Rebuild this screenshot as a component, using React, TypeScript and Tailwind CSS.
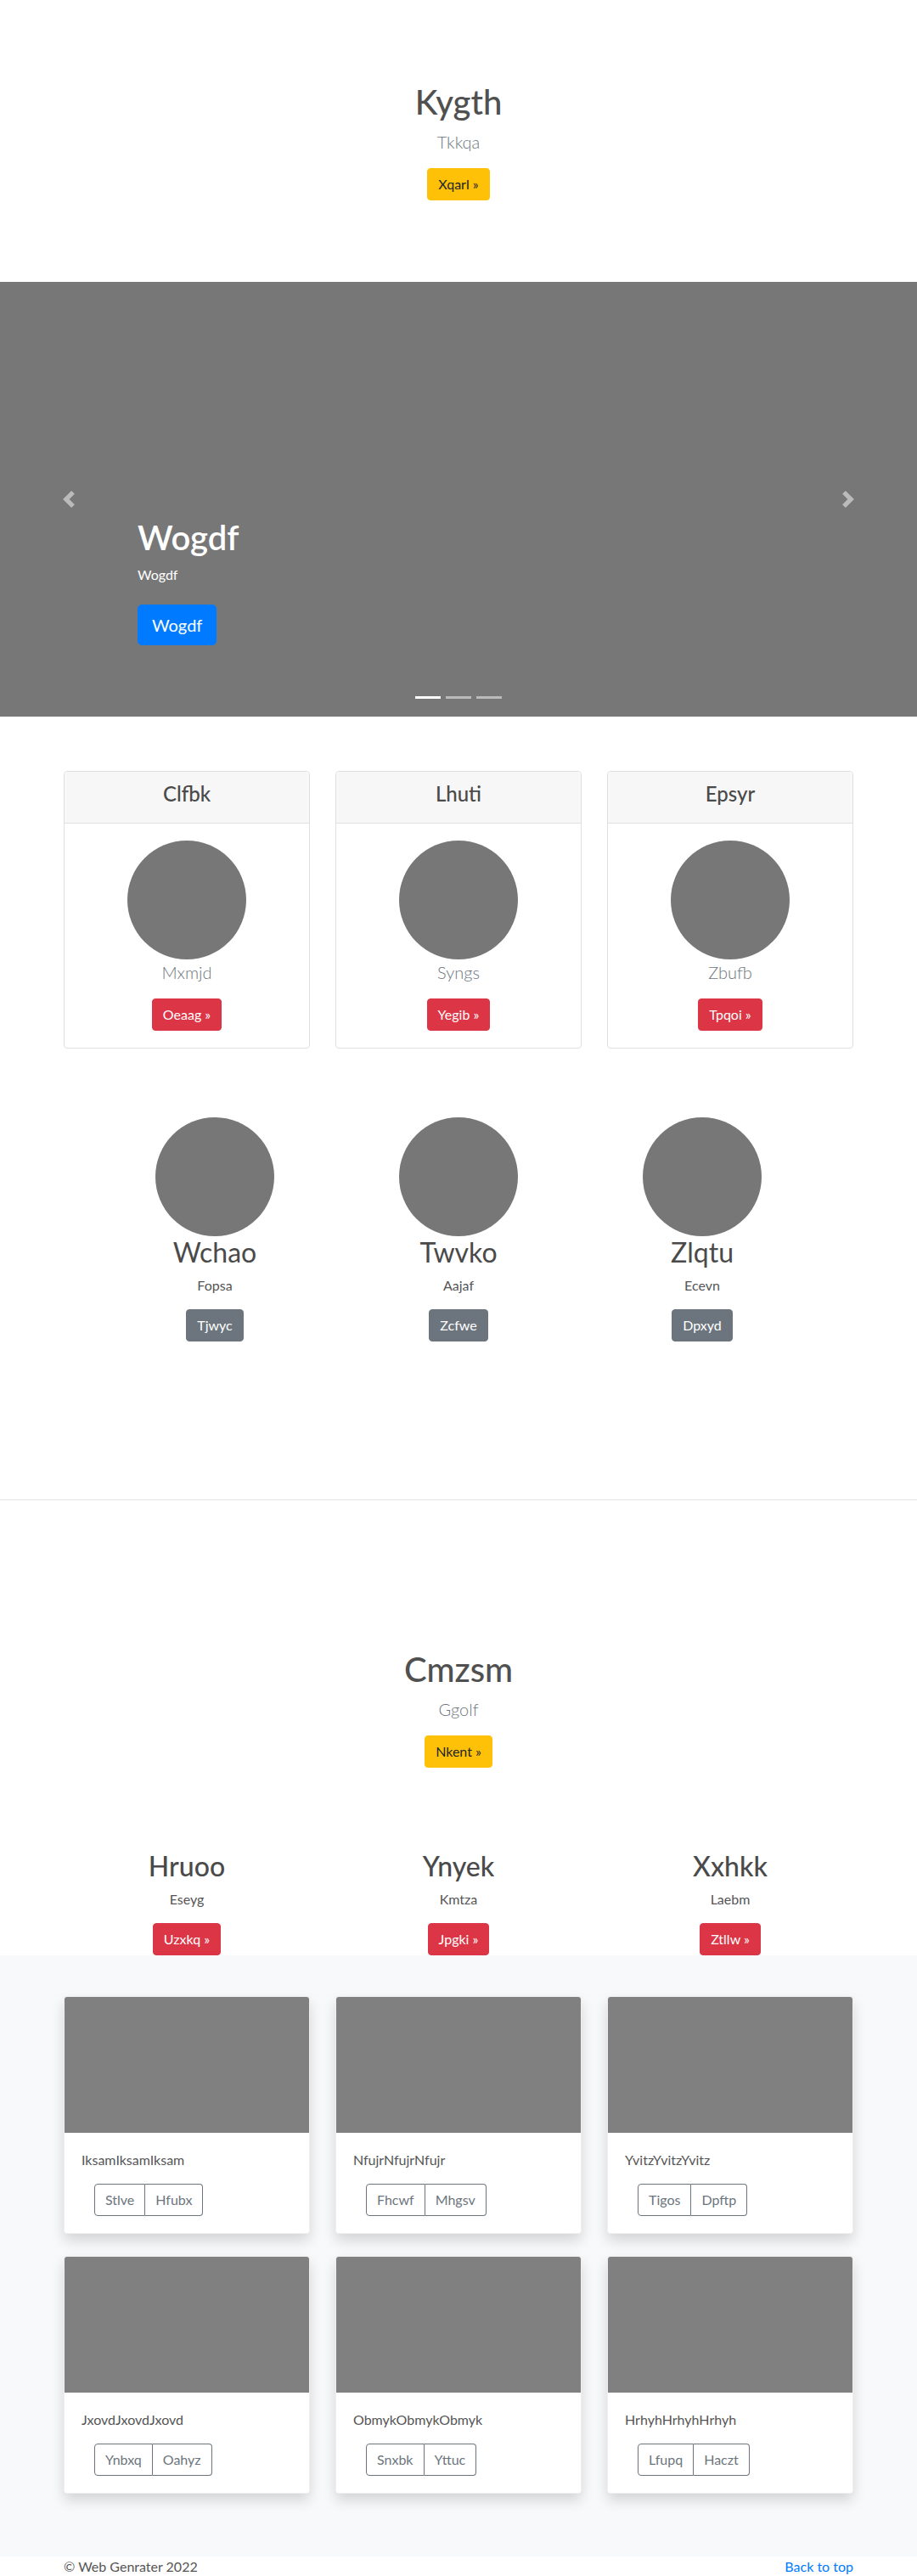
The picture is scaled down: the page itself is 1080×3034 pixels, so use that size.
import React from "react";

const btn = "inline-block rounded-[4px] border px-3 py-[6px] text-base leading-6 align-middle";

function PrevIcon() {
  return (
    <svg width="20" height="20" viewBox="0 0 8 8" fill="#fff">
      <path d="M5.25 0l-4 4 4 4 1.5-1.5L4.25 4l2.5-2.5L5.25 0z" />
    </svg>
  );
}
function NextIcon() {
  return (
    <svg width="20" height="20" viewBox="0 0 8 8" fill="#fff">
      <path d="M2.75 0l-1.5 1.5L3.75 4l-2.5 2.5L2.75 8l4-4-4-4z" />
    </svg>
  );
}

const deck = [
  { title: "Clfbk", name: "Mxmjd", btn: "Oeaag »" },
  { title: "Lhuti", name: "Syngs", btn: "Yegib »" },
  { title: "Epsyr", name: "Zbufb", btn: "Tpqoi »" },
];

const marketing = [
  { title: "Wchao", text: "Fopsa", btn: "Tjwyc" },
  { title: "Twvko", text: "Aajaf", btn: "Zcfwe" },
  { title: "Zlqtu", text: "Ecevn", btn: "Dpxyd" },
];

const features = [
  { title: "Hruoo", text: "Eseyg", btn: "Uzxkq »" },
  { title: "Ynyek", text: "Kmtza", btn: "Jpgki »" },
  { title: "Xxhkk", text: "Laebm", btn: "Ztllw »" },
];

const album = [
  { text: "IksamIksamIksam", a: "Stlve", b: "Hfubx" },
  { text: "NfujrNfujrNfujr", a: "Fhcwf", b: "Mhgsv" },
  { text: "YvitzYvitzYvitz", a: "Tigos", b: "Dpftp" },
  { text: "JxovdJxovdJxovd", a: "Ynbxq", b: "Oahyz" },
  { text: "ObmykObmykObmyk", a: "Snxbk", b: "Yttuc" },
  { text: "HrhyhHrhyhHrhyh", a: "Lfupq", b: "Haczt" },
];

export default function App() {
  return (
    <div className="font-['Lato','Open_Sans',sans-serif] text-[#555] bg-white w-[1080px]">
      {/* Hero */}
      <section className="py-24 text-center">
        <h1 className="text-[40px] leading-[48px] font-medium text-[#505050] mb-2">Kygth</h1>
        <p className="text-xl leading-[30px] font-light text-[#6c757d] mb-4">Tkkqa</p>
        <a className={`${btn} bg-[#ffc107] border-[#ffc107] text-[#212529]`}>Xqarl »</a>
      </section>

      {/* Carousel */}
      <div className="relative h-[512px] bg-[#777777] overflow-hidden">
        <div className="absolute left-0 top-0 bottom-0 w-[162px] flex items-center justify-center opacity-50">
          <PrevIcon />
        </div>
        <div className="absolute right-0 top-0 bottom-0 w-[162px] flex items-center justify-center opacity-50">
          <NextIcon />
        </div>
        <div className="absolute left-[162px] right-[162px] bottom-[48px] pt-5 pb-5 text-left text-white">
          <h1 className="text-[40px] leading-[48px] font-semibold mb-2">Wogdf</h1>
          <p className="text-base leading-6 mb-[23px]">Wogdf</p>
          <p className="mb-4">
            <a className="inline-block rounded-[5px] border border-[#007bff] bg-[#007bff] text-white px-4 py-2 text-xl leading-[30px]">
              Wogdf
            </a>
          </p>
        </div>
        <div className="absolute left-0 right-0 bottom-[21px] flex justify-center gap-[6px]">
          <span className="block w-[30px] h-[3px] bg-white" />
          <span className="block w-[30px] h-[3px] bg-white opacity-50" />
          <span className="block w-[30px] h-[3px] bg-white opacity-50" />
        </div>
      </div>

      {/* Card deck */}
      <div className="w-[960px] mx-auto px-[15px] pt-[64px]">
        <div className="grid grid-cols-3 gap-[30px]">
          {deck.map((c) => (
            <div key={c.title} className="border border-[#dfdfdf] rounded-[4px] text-center overflow-hidden">
              <div className="bg-[#f7f7f7] border-b border-[#dfdfdf] pt-3 pb-3 px-5">
                <h4 className="text-2xl leading-[28px] font-medium text-[#4a4a4a] mb-2">{c.title}</h4>
              </div>
              <div className="p-5 flex flex-col items-center">
                <div className="w-[140px] h-[140px] rounded-full bg-[#777777]" />
                <p className="text-xl leading-[30px] font-light text-[#6c757d] mb-4">{c.name}</p>
                <a className={`${btn} bg-[#dc3545] border-[#dc3545] text-white`}>{c.btn}</a>
              </div>
            </div>
          ))}
        </div>
      </div>

      {/* Marketing */}
      <div className="w-[861px] mx-auto grid grid-cols-3 pt-[81px]">
        {marketing.map((m) => (
          <div key={m.title} className="flex flex-col items-center text-center">
            <div className="w-[140px] h-[140px] rounded-full bg-[#777777]" />
            <h2 className="text-[32px] leading-[38px] font-normal text-[#4a4a4a] mb-2">{m.title}</h2>
            <p className="text-base leading-6 mb-4">{m.text}</p>
            <a className={`${btn} bg-[#6c757d] border-[#6c757d] text-white`}>{m.btn}</a>
          </div>
        ))}
      </div>

      <hr className="mt-[186px] border-0 border-t border-[#e4e4e4]" />

      {/* Second hero */}
      <section className="pt-[175px] text-center">
        <h1 className="text-[40px] leading-[48px] font-medium text-[#505050] mb-2">Cmzsm</h1>
        <p className="text-xl leading-[30px] font-light text-[#6c757d] mb-4">Ggolf</p>
        <a className={`${btn} bg-[#ffc107] border-[#ffc107] text-[#212529]`}>Nkent »</a>
      </section>

      <div className="w-[960px] mx-auto grid grid-cols-3 mt-[97px]">
        {features.map((f) => (
          <div key={f.title} className="text-center">
            <h2 className="text-[32px] leading-[38px] font-medium text-[#4a4a4a] mb-2">{f.title}</h2>
            <p className="text-base leading-6 mb-4">{f.text}</p>
            <a className={`${btn} bg-[#dc3545] border-[#dc3545] text-white`}>{f.btn}</a>
          </div>
        ))}
      </div>

      {/* Album */}
      <div className="bg-[#f8f9fa] pt-12 pb-[74px]">
        <div className="w-[960px] mx-auto px-[15px] grid grid-cols-3 gap-x-[30px] gap-y-[26px]">
          {album.map((a) => (
            <div
              key={a.text}
              className="bg-white rounded-[4px] border border-[#00000010] overflow-hidden shadow-[0_8px_16px_rgba(0,0,0,0.15)]"
            >
              <div className="h-[160px] bg-[#808080]" />
              <div className="p-5">
                <p className="text-base leading-6 mb-4 text-[#555]">{a.text}</p>
                <div className="ml-[15px] inline-flex">
                  <a className="border border-[#6c757d] text-[#6c757d] rounded-l-[4px] px-3 py-[6px] text-base leading-6">{a.a}</a>
                  <a className="border border-l-0 border-[#6c757d] text-[#6c757d] rounded-r-[4px] px-3 py-[6px] text-base leading-6">{a.b}</a>
                </div>
              </div>
            </div>
          ))}
        </div>
      </div>

      {/* Footer */}
      <footer className="w-[960px] mx-auto px-[15px] h-6 flex justify-between items-start text-base leading-6">
        <p className="text-[#555]">© Web Genrater 2022</p>
        <a className="text-[#007bff]">Back to top</a>
      </footer>
    </div>
  );
}
